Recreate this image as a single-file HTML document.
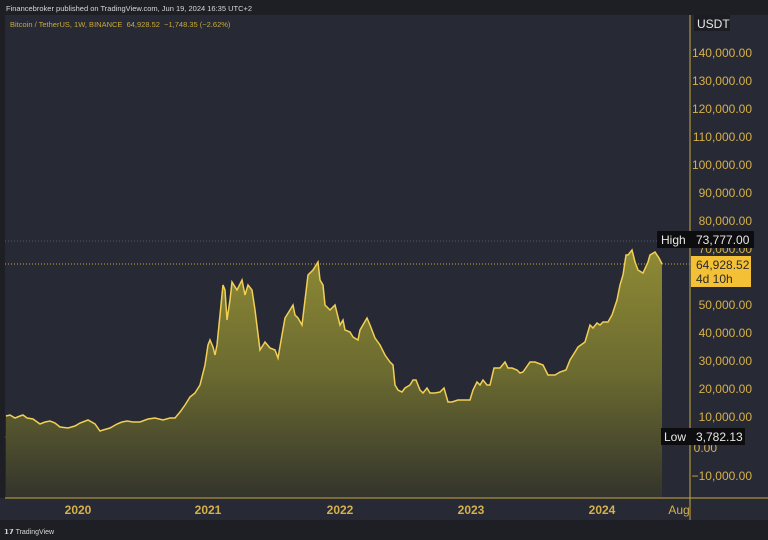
<!DOCTYPE html>
<html><head><meta charset="utf-8"><style>
html,body{margin:0;padding:0;width:768px;height:540px;overflow:hidden;background:#1e1f25;font-family:"Liberation Sans",sans-serif}
.t{position:absolute;white-space:nowrap}
</style></head><body>
<svg width="768" height="540" style="position:absolute;left:0;top:0">
<defs><linearGradient id="g" x1="0" y1="0" x2="0" y2="1">
<stop offset="0" stop-color="#8f8a35"/><stop offset="0.5" stop-color="#6b6a30"/><stop offset="1" stop-color="#33342c"/></linearGradient></defs>
<rect x="5" y="15" width="685" height="483" fill="#272a35"/>
<rect x="690" y="15" width="78" height="505" fill="#272a35"/>
<rect x="0" y="498" width="768" height="24" fill="#272a35"/>
<rect x="0" y="520" width="768" height="20" fill="#1e1f25"/>
<line x1="5" y1="241" x2="690" y2="241" stroke="#555a66" stroke-dasharray="1,2"/>
<line x1="5" y1="264" x2="690" y2="264" stroke="#c9a83a" stroke-dasharray="1,2"/>
<line x1="5" y1="437" x2="690" y2="437" stroke="#555a66" stroke-dasharray="1,2"/>
<polygon fill="url(#g)" points="6,498 6,416 10,415 15,418 20,416 23,415 27,418 33,419 40,424 45,422 50,421 55,423 60,427 68,428 75,426 80,423 88,420 95,424 100,431 103,430 110,428 117,424 122,422 127,421 133,422 140,422 148,419 155,418 163,420 170,418 175,418 180,412 185,405 190,397 195,393 200,385 205,365 208,345 210,340 213,347 215,355 217,345 220,315 223,285 225,290 227,320 230,300 232,282 237,290 242,280 245,295 248,285 252,290 255,310 260,350 265,342 270,348 275,350 278,358 282,335 285,318 290,310 293,305 295,315 298,318 302,325 305,300 308,275 313,270 318,262 320,280 323,285 325,305 330,310 335,305 340,325 343,320 345,330 350,332 353,337 358,340 360,330 367,318 370,325 375,338 380,345 385,355 390,362 393,365 395,385 398,390 402,392 405,388 410,385 413,380 416,380 420,390 423,393 427,388 430,393 435,393 440,392 444,388 448,402 452,402 458,400 470,400 473,390 477,382 480,385 483,380 487,385 490,385 494,368 500,368 505,362 508,368 512,368 517,370 520,373 523,372 530,362 535,362 543,365 548,375 555,375 560,372 566,370 570,360 575,352 578,347 585,342 590,325 593,328 597,323 600,325 603,322 608,322 612,315 617,300 620,285 623,275 626,255 628,255 632,250 635,262 638,270 643,273 648,262 650,255 655,252 659,258 662,264 662,498"/>
<polyline fill="none" stroke="#f2cf55" stroke-width="1.5" points="6,416 10,415 15,418 20,416 23,415 27,418 33,419 40,424 45,422 50,421 55,423 60,427 68,428 75,426 80,423 88,420 95,424 100,431 103,430 110,428 117,424 122,422 127,421 133,422 140,422 148,419 155,418 163,420 170,418 175,418 180,412 185,405 190,397 195,393 200,385 205,365 208,345 210,340 213,347 215,355 217,345 220,315 223,285 225,290 227,320 230,300 232,282 237,290 242,280 245,295 248,285 252,290 255,310 260,350 265,342 270,348 275,350 278,358 282,335 285,318 290,310 293,305 295,315 298,318 302,325 305,300 308,275 313,270 318,262 320,280 323,285 325,305 330,310 335,305 340,325 343,320 345,330 350,332 353,337 358,340 360,330 367,318 370,325 375,338 380,345 385,355 390,362 393,365 395,385 398,390 402,392 405,388 410,385 413,380 416,380 420,390 423,393 427,388 430,393 435,393 440,392 444,388 448,402 452,402 458,400 470,400 473,390 477,382 480,385 483,380 487,385 490,385 494,368 500,368 505,362 508,368 512,368 517,370 520,373 523,372 530,362 535,362 543,365 548,375 555,375 560,372 566,370 570,360 575,352 578,347 585,342 590,325 593,328 597,323 600,325 603,322 608,322 612,315 617,300 620,285 623,275 626,255 628,255 632,250 635,262 638,270 643,273 648,262 650,255 655,252 659,258 662,264"/>
<line x1="5" y1="498" x2="768" y2="498" stroke="#c9a83a" stroke-width="1"/>
<line x1="690" y1="15" x2="690" y2="520" stroke="#c9a83a" stroke-width="1"/>
<g fill="#d6b04a" font-family="Liberation Sans" font-size="12" text-anchor="end">
<text x="752" y="57">140,000.00</text><text x="752" y="85">130,000.00</text><text x="752" y="113">120,000.00</text>
<text x="752" y="141">110,000.00</text><text x="752" y="169">100,000.00</text><text x="752" y="197">90,000.00</text>
<text x="752" y="225">80,000.00</text><text x="752" y="253">70,000.00</text><text x="752" y="309">50,000.00</text>
<text x="752" y="337">40,000.00</text><text x="752" y="365">30,000.00</text><text x="752" y="393">20,000.00</text>
<text x="752" y="421">10,000.00</text><text x="717" y="452">0.00</text><text x="752" y="480">−10,000.00</text>
</g>
<g fill="#d6b04a" font-family="Liberation Sans" font-size="12" font-weight="bold" text-anchor="middle">
<text x="78" y="514">2020</text><text x="208" y="514">2021</text><text x="340" y="514">2022</text><text x="471" y="514">2023</text><text x="602" y="514">2024</text>
<text x="679" y="514" font-weight="normal">Aug</text></g>
<rect x="694" y="15" width="36" height="16" fill="#1c1d22"/>
<text x="697" y="28" fill="#e8e8e8" font-size="12" font-family="Liberation Sans">USDT</text>
<rect x="657" y="231" width="34" height="17" fill="#0d0d0f"/>
<text x="661" y="244" fill="#e8e8e8" font-size="12" font-family="Liberation Sans">High</text>
<rect x="691" y="231" width="63" height="17" fill="#0d0d0f"/>
<text x="696" y="244" fill="#e8e8e8" font-size="12" font-family="Liberation Sans">73,777.00</text>
<rect x="691" y="256" width="60" height="31" fill="#f4c036"/>
<text x="696" y="269" fill="#2a2a2a" font-size="12" font-family="Liberation Sans">64,928.52</text>
<text x="696" y="283" fill="#2a2a2a" font-size="12" font-family="Liberation Sans">4d 10h</text>
<rect x="661" y="428" width="30" height="17" fill="#0d0d0f"/>
<text x="664" y="441" fill="#e8e8e8" font-size="12" font-family="Liberation Sans">Low</text>
<rect x="691" y="428" width="54" height="17" fill="#0d0d0f"/>
<text x="696" y="441" fill="#e8e8e8" font-size="12" font-family="Liberation Sans">3,782.13</text>
</svg>
<div class="t" style="left:6px;top:4px;font-size:7.5px;color:#d8d8d8">Financebroker published on TradingView.com, Jun 19, 2024 16:35 UTC+2</div>
<div class="t" style="left:10px;top:20px;font-size:7.5px;color:#c9a83a">Bitcoin / TetherUS, 1W, BINANCE&nbsp; 64,928.52&nbsp; −1,748.35 (−2.62%)</div>
<div class="t" style="left:4px;top:528px;font-size:7px;color:#d8d8d8"><b>𝟭𝟳</b> TradingView</div>
</body></html>
